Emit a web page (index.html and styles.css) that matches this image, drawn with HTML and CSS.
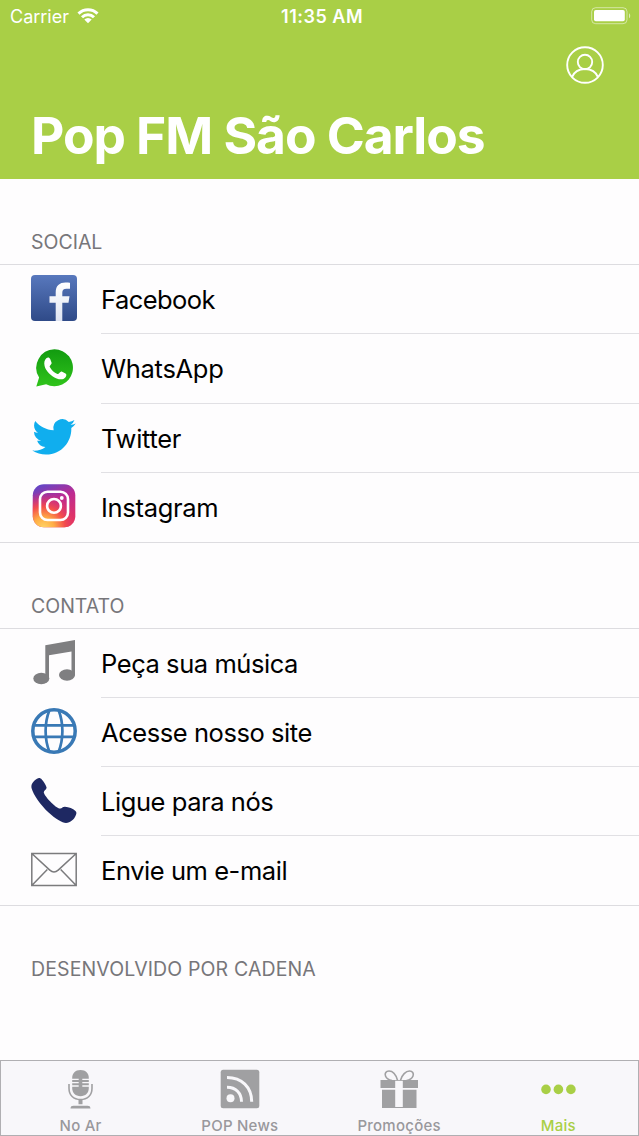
FILE: index.html
```html
<!DOCTYPE html>
<html lang="pt-BR">
<head>
    <meta charset="UTF-8">
    <meta name="viewport" content="width=device-width, initial-scale=1.0">
    <title>Pop FM São Carlos</title>
    <link rel="stylesheet" href="styles.css">
</head>
<body>
    <div class="app">
        <header class="header">
            <div class="status-bar">
                <div class="carrier">
                    <span class="carrier-name">Carrier</span>
                    <svg class="wifi" viewBox="0 0 22 16">
                        <path d="M1.5 5.6a13.6 13.6 0 0 1 19 0M5 9.2a8.6 8.6 0 0 1 12 0" fill="none" stroke="#fff" stroke-width="3"/>
                        <path d="M7.3 11.6a5.3 5.3 0 0 1 7.4 0L11 15.3z" fill="#fff"/>
                    </svg>
                </div>
                <span class="time">11:35 AM</span>
                <svg class="battery" viewBox="0 0 40 18">
                    <rect x="0.7" y="0.7" width="35.3" height="16" rx="4" fill="none" stroke="#fff" stroke-opacity="0.5"/>
                    <rect x="3" y="3" width="30.8" height="11.2" rx="1.8" fill="#fff"/>
                    <path d="M38 6.2c1.6.7 1.6 4.4 0 5z" fill="#fff" fill-opacity="0.6"/>
                </svg>
            </div>
            <div class="actions">
                <svg class="user" viewBox="0 0 38 38" fill="none" stroke="#fff" stroke-width="1.9">
                    <circle cx="19" cy="19" r="17.8"/>
                    <circle cx="19" cy="16" r="7.2"/>
                    <path d="M6 31.2c2-5.1 7.1-8.2 13-8.2s11 3.1 13 8.2"/>
                </svg>
            </div>
            <h1 class="title">Pop FM São Carlos</h1>
        </header>

        <main class="content">
            <h2 class="section-title">SOCIAL</h2>
            <ul class="list social">
                <li class="row">
                    <svg class="icon" viewBox="0 0 46 46">
                        <defs>
                            <linearGradient id="fb" x1="0" y1="0" x2="0" y2="1">
                                <stop offset="0" stop-color="#5878bd"/>
                                <stop offset="1" stop-color="#2f4a88"/>
                            </linearGradient>
                            <linearGradient id="fbLetter" x1="0" y1="0" x2="0" y2="1">
                                <stop offset="0" stop-color="#fff"/>
                                <stop offset="1" stop-color="#dfe4f2"/>
                            </linearGradient>
                        </defs>
                        <rect width="46" height="46" rx="4" fill="url(#fb)"/>
                        <path d="M24.7 46V27.8h-6.2v-6.5h6.2v-3.8c0-6.9 3.8-10.1 9.8-10.1 2 0 3.6.1 4.5.3v6h-3.5c-3.1 0-4.2 1.3-4.2 4v3.6h7.2l-1 6.5h-6.2V46z" fill="url(#fbLetter)"/>
                    </svg>
                    <span class="label tighter">Facebook</span>
                </li>
                <li class="row">
                    <svg class="icon" viewBox="0 0 46 46">
                        <defs>
                            <linearGradient id="wa" x1="0" y1="0" x2="0" y2="1">
                                <stop offset="0" stop-color="#129b10"/>
                                <stop offset="1" stop-color="#30c41b"/>
                            </linearGradient>
                        </defs>
                        <path d="M23.5 4.3a18.5 18.5 0 1 1-8.4 35L5.3 41.5l2.8-8.9A18.5 18.5 0 0 1 23.5 4.3z" fill="url(#wa)"/>
                        <path d="M15.3 13.3c1.6-1.5 3.2-.9 3.9.8l1.4 3.6c.5 1.4-2.5 2.9-1.8 4.2 1.8 3.3 4.2 5.6 7.6 7.1 1.4.6 2.9-3 4.3-2.4l3.8 1.9c1.5.8.8 2.7-.2 3.9-1.7 2-4.7 2.5-8.7 1-5.7-2.1-10.8-7.4-12-12.4-.8-3.3-.1-5.9 1.7-7.7z" fill="#fff"/>
                    </svg>
                    <span class="label wider">WhatsApp</span>
                </li>
                <li class="row">
                    <svg class="icon" viewBox="0 0 46 46">
                        <path transform="translate(1.3 1.2) scale(1.81)" fill="#10aeee" d="M23.953 4.57a10 10 0 0 1-2.825.775 4.958 4.958 0 0 0 2.163-2.723c-.951.555-2.005.959-3.127 1.184a4.92 4.92 0 0 0-8.384 4.482C7.69 8.095 4.067 6.13 1.64 3.162a4.822 4.822 0 0 0-.666 2.475c0 1.71.87 3.213 2.188 4.096a4.904 4.904 0 0 1-2.228-.616v.06a4.923 4.923 0 0 0 3.946 4.827 4.996 4.996 0 0 1-2.212.085 4.936 4.936 0 0 0 4.604 3.417 9.867 9.867 0 0 1-6.102 2.105c-.39 0-.779-.023-1.17-.067a13.995 13.995 0 0 0 7.557 2.209c9.053 0 13.998-7.496 13.998-13.985 0-.21 0-.42-.015-.63A9.935 9.935 0 0 0 24 4.59z"/>
                    </svg>
                    <span class="label wider">Twitter</span>
                </li>
                <li class="row">
                    <svg class="icon" viewBox="0 0 46 46">
                        <defs>
                            <linearGradient id="igBase" x1="0.1" y1="0" x2="0.5" y2="1">
                                <stop offset="0" stop-color="#5a48cb"/>
                                <stop offset="0.45" stop-color="#bc2b92"/>
                                <stop offset="1" stop-color="#e43262"/>
                            </linearGradient>
                            <radialGradient id="igGlow" cx="0.25" cy="1.03" r="0.85">
                                <stop offset="0" stop-color="#ffd768"/>
                                <stop offset="0.3" stop-color="#ffae45"/>
                                <stop offset="0.6" stop-color="#f34e4c"/>
                                <stop offset="1" stop-color="#d52b78" stop-opacity="0"/>
                            </radialGradient>
                        </defs>
                        <rect x="1.8" y="1.3" width="42.5" height="43" rx="11" fill="url(#igBase)"/>
                        <rect x="1.8" y="1.3" width="42.5" height="43" rx="11" fill="url(#igGlow)"/>
                        <g fill="none" stroke="#fff" stroke-width="2.6">
                            <rect x="9" y="8.7" width="28" height="28.3" rx="7.5"/>
                            <circle cx="23" cy="22.9" r="6.9"/>
                        </g>
                        <circle cx="30.8" cy="15" r="1.9" fill="#fff"/>
                    </svg>
                    <span class="label wider">Instagram</span>
                </li>
            </ul>

            <h2 class="section-title">CONTATO</h2>
            <ul class="list">
                <li class="row">
                    <svg class="icon" viewBox="0 0 46 46" fill="#7f7f81">
                        <path d="M14.3 6.2L44 1v35.5h-3.5V12.6L18 16.3V40h-3.7z"/>
                        <ellipse cx="10.3" cy="39.5" rx="8" ry="5.7"/>
                        <ellipse cx="36" cy="36" rx="8" ry="5.7"/>
                    </svg>
                    <span class="label">Peça sua música</span>
                </li>
                <li class="row">
                    <svg class="icon" viewBox="0 0 46 46" fill="none" stroke="#3979b5" stroke-width="2.7">
                        <circle cx="23" cy="23" r="21.2" stroke-width="3.5"/>
                        <path d="M3 17.3h40M3 28.8h40M18.5 2C13.3 15 13.3 31 18.5 44M27.5 2C32.7 15 32.7 31 27.5 44"/>
                    </svg>
                    <span class="label">Acesse nosso site</span>
                </li>
                <li class="row">
                    <svg class="icon" viewBox="0 0 46 46">
                        <path d="M6 1.7C8 .5 9.5 1 10.8 2.5c2 2.3 3.9 5 4.7 7.8.5 2-2.6 3.1-2.7 4.9-.1 1.6 2.8 5.6 6.2 9.1 3.8 4 7.9 7.4 10.3 7.3 1.8-.1 2.3-1.9 4.7-1.8 4 .2 7.8 1.8 10.5 4.2 1.3 1.2 1 2.5.3 4.3-1.5 4-5.5 7.6-9.8 7.7-3.6 0-10.7-4.2-17.7-10.7C9.6 28 2.3 17.8.6 11.3-.4 7.3 2.5 3.7 6 1.7z" fill="#1e2862"/>
                    </svg>
                    <span class="label">Ligue para nós</span>
                </li>
                <li class="row">
                    <svg class="icon" viewBox="0 0 46 46" fill="none" stroke="#7b7b7d" stroke-width="1.5">
                        <path d="M.8 7.5h44.4v32H.8zM.8 7.5l18 16.6c2.8 2.5 5.6 2.5 8.4 0L45.2 7.5M.8 39.5l15.5-16M45.2 39.5L29.7 23.5"/>
                    </svg>
                    <span class="label">Envie um e-mail</span>
                </li>
            </ul>

            <h2 class="section-title credits">DESENVOLVIDO POR CADENA</h2>
        </main>

        <nav class="tab-bar">
            <a class="tab">
                <svg class="tab-icon" viewBox="0.5 0 40 40">
                    <path d="M20 1c5.3 0 8.3 3.5 8.3 8v10c0 5-3.3 8.2-8.3 8.2s-8.3-3.2-8.3-8.2V9c0-4.5 3-8 8.3-8z" fill="#a0a0a2"/>
                    <path d="M11 10.4h7.2M11 13.7h7.2M11 17h7.2M21.8 10.4H29M21.8 13.7H29M21.8 17H29" stroke="#f8f7fa" stroke-width="1.3"/>
                    <path d="M8.5 15v4.2c0 7 4.5 11.3 11.5 11.3s11.5-4.3 11.5-11.3V15" fill="none" stroke="#a0a0a2" stroke-width="1.6"/>
                    <path d="M18 30h4v5.2h-4zM10 39.5c.2-2 1-2.7 3-2.7h14c2 0 2.8.7 3 2.7z" fill="#a0a0a2"/>
                </svg>
                <span class="tab-label">No Ar</span>
            </a>
            <a class="tab">
                <svg class="tab-icon" viewBox="0 0 40 40">
                    <rect x="0.7" y="0.7" width="38.6" height="38.6" rx="2.5" fill="#a0a0a2"/>
                    <circle cx="10.5" cy="29.3" r="4" fill="#f8f7fa"/>
                    <path d="M7 18.3c8.8 0 14.5 5.7 14.5 14.5M7 8.5c14.7 0 24.7 9.7 24.7 24.3" fill="none" stroke="#f8f7fa" stroke-width="3"/>
                </svg>
                <span class="tab-label">POP News</span>
            </a>
            <a class="tab">
                <svg class="tab-icon" viewBox="0 0 40 40">
                    <path d="M1.5 11H39v8H1.5zM3 20.8h34.5V39H3z" fill="#a0a0a2"/>
                    <path d="M16.2 11.8h7.6v26.2h-7.6z" fill="#f8f7fa"/>
                    <path d="M18.5 11.2C17 6 13.8 2 10 2 7 2 5.5 4.5 6.5 7c.9 2.5 3.5 4 6.5 4.5M21.5 11.2C23 6 26.8 2 30.5 2c3 0 4.5 2.5 3.5 5-.9 2.5-3.5 4-6.5 4.5" fill="none" stroke="#a0a0a2" stroke-width="1.6"/>
                </svg>
                <span class="tab-label">Promoções</span>
            </a>
            <a class="tab active">
                <svg class="tab-icon" viewBox="-0.4 -0.4 40 40" fill="#a9cf46">
                    <circle cx="7.6" cy="20" r="4.8"/>
                    <circle cx="20" cy="20" r="4.8"/>
                    <circle cx="32.5" cy="20" r="4.8"/>
                </svg>
                <span class="tab-label">Mais</span>
            </a>
        </nav>
    </div>
</body>
</html>
```
FILE: styles.css
```css
* {
    margin: 0;
    padding: 0;
    box-sizing: border-box;
}

body {
    background: #fefdfe;
    font-family: 'Inter', 'Liberation Sans', sans-serif;
    color: #000;
}

.app {
    display: flex;
    flex-direction: column;
    height: 1136px;
}

.header {
    height: 179px;
    background: #a9cf46;
    color: #fff;
}

.status-bar {
    display: grid;
    grid-template-columns: 1fr auto 1fr;
    align-items: center;
    height: 32px;
    padding: 0 8px 0 10px;
    font-size: 18px;
}

.carrier {
    display: flex;
    align-items: center;
    gap: 8px;
}

.wifi {
    width: 22px;
    height: 16px;
}

.time {
    padding-left: 3px;
    font-weight: 600;
    font-size: 18px;
    letter-spacing: 0.5px;
}

.battery {
    width: 40px;
    height: 18px;
    justify-self: end;
}

.actions {
    display: flex;
    justify-content: flex-end;
    padding: 14px 35px 0 0;
}

.user {
    width: 38px;
    height: 38px;
}

.title {
    padding-left: 31px;
    margin-top: 19px;
    font-size: 51.5px;
    line-height: 64px;
    font-weight: 700;
    letter-spacing: -1.03px;
    white-space: nowrap;
}

.content {
    flex: 1;
}

.section-title {
    height: 85px;
    padding: 51px 0 0 31px;
    font-size: 19.5px;
    line-height: 24px;
    font-weight: 400;
    color: #77767a;
}

.credits {
    letter-spacing: 0.13px;
}

.list {
    list-style: none;
    border-top: 1px solid #dddce0;
    border-bottom: 1px solid #dddce0;
}

.row {
    display: flex;
    align-items: center;
    height: 69px;
    padding-left: 31px;
}

.social .row {
    height: 69.4px;
}

.social .row:last-child {
    height: 68.8px;
}

.icon {
    flex: none;
    width: 46px;
    height: 46px;
    margin: 0 24px 3px 0;
}

.label {
    flex: 1;
    height: 100%;
    border-bottom: 1px solid #e1e0e4;
    font-size: 25.5px;
    line-height: 69px;
    letter-spacing: -0.44px;
}

.label.tighter {
    letter-spacing: -0.55px;
}

.label.wider {
    letter-spacing: -0.3px;
}

.row:last-child .label {
    border-bottom: none;
}

.tab-bar {
    display: grid;
    grid-template-columns: repeat(4, 1fr);
    height: 76px;
    border: 1px solid #b0afb2;
    background: #f8f7fa;
}

.tab {
    display: flex;
    flex-direction: column;
    align-items: center;
    padding-top: 8px;
    color: #99989c;
}

.tab.active {
    color: #a9cf46;
}

.tab-icon {
    width: 40px;
    height: 40px;
}

.tab-label {
    margin-top: 8px;
    font-size: 15px;
    line-height: 18px;
    font-weight: 500;
    letter-spacing: 0.25px;
}
```
